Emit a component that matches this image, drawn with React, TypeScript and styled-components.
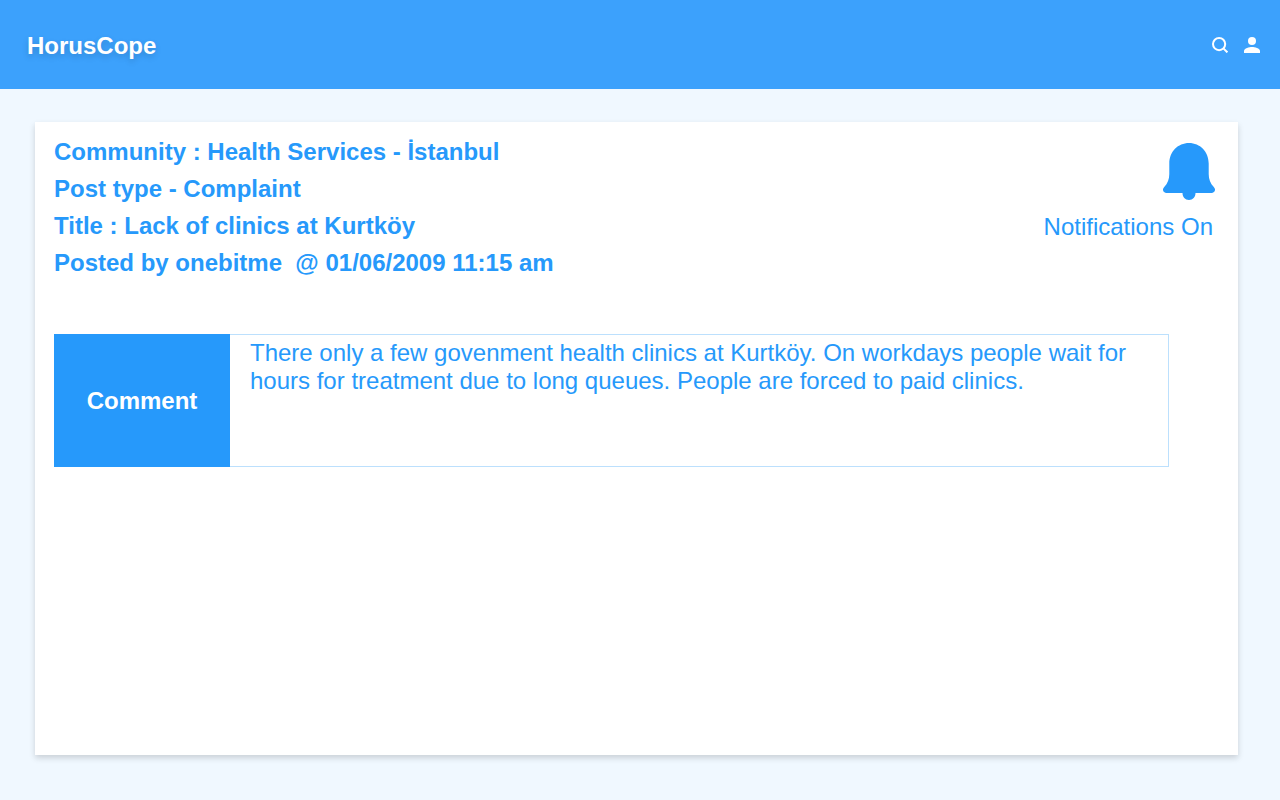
import React from "react";
import styled, { createGlobalStyle } from "styled-components";

const blue = "#2699fb";

const GlobalStyle = createGlobalStyle`
  *, *::before, *::after { box-sizing: border-box; }
  body {
    margin: 0;
    background: #f0f8ff;
    color: ${blue};
    font-family: "Liberation Sans", Arial, sans-serif;
    font-size: 24px;
    line-height: 28px;
  }
`;

const Page = styled.div`
  display: flex;
  flex-direction: column;
  min-height: 100vh;
`;

const Header = styled.header`
  display: flex;
  align-items: center;
  justify-content: space-between;
  padding: 32px 20px 29px 27px;
  background: #3ca1fc;
  color: #ffffff;
`;

const Brand = styled.a`
  color: inherit;
  font-weight: bold;
  text-decoration: none;
  text-shadow: 0 3px 6px rgba(0, 0, 0, 0.16);
`;

const Actions = styled.nav`
  display: flex;
  gap: 16px;
  padding-bottom: 2px;
`;

const IconButton = styled.button`
  display: block;
  padding: 0;
  border: 0;
  background: none;
  color: inherit;
  cursor: pointer;

  svg { display: block; }
`;

const Card = styled.main`
  flex: 1;
  margin: 33px 42px 45px 35px;
  padding: 11px 18px 18px 19px;
  background: #ffffff;
  box-shadow: 0 3px 6px rgba(0, 0, 0, 0.16);
`;

const PostHeader = styled.div`
  display: flex;
  justify-content: space-between;
  align-items: flex-start;
`;

const Details = styled.div`
  display: flex;
  flex-direction: column;
`;

const Detail = styled.p`
  margin: 0;
  font-weight: bold;
  line-height: 37px;
  white-space: pre-wrap;
`;

const Notifications = styled.button`
  display: flex;
  flex-direction: column;
  align-items: flex-end;
  gap: 13px;
  margin: 10px 5px 0 0;
  padding: 0;
  border: 0;
  background: none;
  color: inherit;
  font: inherit;
  cursor: pointer;
`;

const NotificationLabel = styled.span`
  padding-right: 2px;
`;

const Comment = styled.section`
  display: grid;
  grid-template-columns: 176px 1fr;
  min-height: 133px;
  margin: 53px 51px 0 0;
`;

const CommentHeading = styled.h2`
  display: flex;
  align-items: center;
  justify-content: center;
  margin: 0;
  background: ${blue};
  color: #ffffff;
  font-size: 24px;
`;

const CommentText = styled.p`
  margin: 0;
  padding: 4px 20px;
  border: 1px solid #bce0fd;
  border-left: 0;
`;

const SearchIcon = () => (
  <svg width="16" height="16" viewBox="0 0 16 16" fill="none" stroke="currentColor" strokeWidth="2" aria-hidden="true">
    <circle cx="7.1" cy="7.1" r="6.1" />
    <path d="M11.4 11.4 15.4 15.4" />
  </svg>
);

const PersonIcon = () => (
  <svg width="16" height="16" viewBox="0 0 16 16" fill="currentColor" aria-hidden="true">
    <circle cx="8" cy="4" r="4" />
    <path d="M8 10c-2.7 0-8 1.3-8 4v2h16v-2c0-2.7-5.3-4-8-4Z" />
  </svg>
);

const BellIcon = () => (
  <svg width="52" height="57" viewBox="0 0 52 57" fill="currentColor" aria-hidden="true">
    <path d="M26 0C15 0 6.300 8.700 6.300 20.500V31C6.300 36 4.700 40.500 1.200 43.900C-1.300 46.400 .3 50 3.600 50H19.500C19.500 54 22.200 57 26 57S32.500 54 32.500 50H48.400C51.700 50 53.300 46.400 50.800 43.900C47.300 40.500 45.700 36 45.700 31V20.500C45.700 8.700 37 0 26 0Z" />
  </svg>
);

export default function App() {
  return (
    <Page>
      <GlobalStyle />
      <Header>
        <Brand href="#">HorusCope</Brand>
        <Actions aria-label="Account">
          <IconButton type="button" aria-label="Search"><SearchIcon /></IconButton>
          <IconButton type="button" aria-label="Profile"><PersonIcon /></IconButton>
        </Actions>
      </Header>
      <Card>
        <PostHeader>
          <Details>
            <Detail>Community : Health Services - İstanbul</Detail>
            <Detail>Post type - Complaint</Detail>
            <Detail>Title : Lack of clinics at Kurtköy</Detail>
            <Detail>{"Posted by onebitme  @ 01/06/2009 11:15 am"}</Detail>
          </Details>
          <Notifications type="button">
            <BellIcon />
            <NotificationLabel>Notifications On</NotificationLabel>
          </Notifications>
        </PostHeader>
        <Comment>
          <CommentHeading>Comment</CommentHeading>
          <CommentText>
            There only a few govenment health clinics at Kurtköy. On workdays people wait for hours for treatment due to long queues. People are forced to paid clinics.
          </CommentText>
        </Comment>
      </Card>
    </Page>
  );
}
